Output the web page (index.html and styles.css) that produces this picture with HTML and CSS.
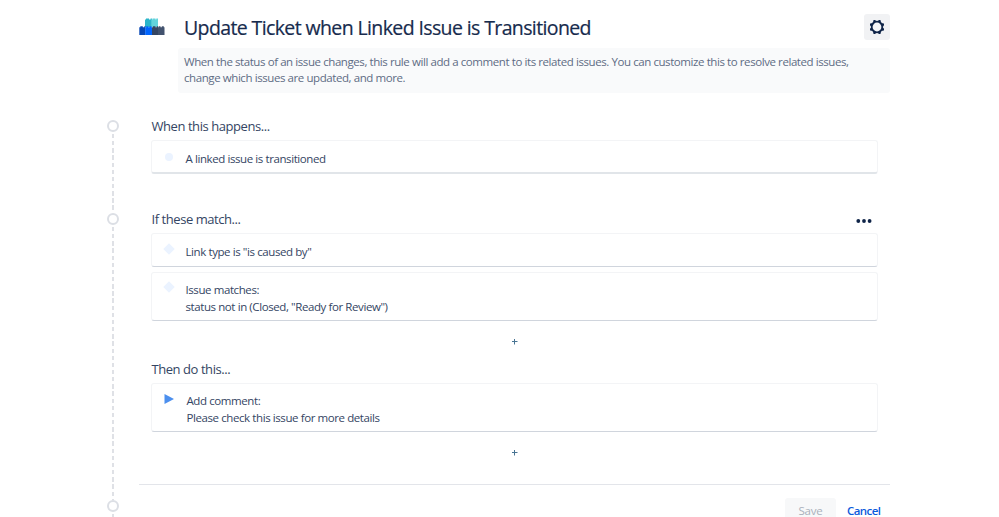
FILE: index.html
```html
<!DOCTYPE html>
<html lang="en">
<head>
<meta charset="utf-8">
<title>Automation rule</title>
<link rel="stylesheet" href="styles.css">
</head>
<body>
<div class="page">
  <div class="timeline">
    <span class="node"></span>
    <span class="dash dash-first"></span>
    <span class="node"></span>
    <span class="dash dash-second"></span>
    <span class="node"></span>
    <span class="dash dash-last"></span>
  </div>
  <main class="main">
    <header class="header">
      <svg class="logo" width="26" height="17" viewBox="0 0 26 17">
        <path fill="#2ab5ca" d="M6 9V1.6h1V.6h3v1h1.600V.6h1.300V9z"/>
        <path fill="#62d3dc" d="M12.500 9V1.600h1V.6h3v1h.800V.6h1.700v1V9z"/>
        <path fill="#0747b6" d="M.3 17V9.200h1v-1h2.500v1h1.500v-1h1.200V17z"/>
        <path fill="#0065ff" d="M6.300 17V9.200h1v-1h2v1h1.200v-1h2v1h.500V17z"/>
        <path fill="#344563" d="M13 17V9.200h1v-1h2.400v1h1.400v-1h1.400V17z"/>
        <path fill="#42526e" d="M19 17V9.200h.8v-1h1.700v1h1.300v-1h2v1h.700V17z"/>
      </svg>
      <h1 class="title">Update Ticket when Linked Issue is Transitioned</h1>
      <button class="settings" aria-label="Settings">
        <svg width="16" height="16" viewBox="0 0 16 16">
          <g fill="#0f2448">
            <rect x="4.200" y="1" width="2.700" height="14" rx="1"/>
            <rect x="9.100" y="1" width="2.700" height="14" rx="1"/>
            <rect x="1" y="4.200" width="14" height="2.700" rx="1"/>
            <rect x="1" y="9.100" width="14" height="2.700" rx="1"/>
            <circle cx="8" cy="8" r="6.200"/>
          </g>
          <circle cx="8" cy="8" r="4.400" fill="#f4f5f7"/>
        </svg>
      </button>
    </header>
    <p class="description">When the status of an issue changes, this rule will add a comment to its related issues. You can customize this to resolve related issues,<br>change which issues are updated, and more.</p>

    <section class="section">
      <h2 class="heading">When this happens...</h2>
      <div class="card card-single trigger">
        <svg class="mark" width="12" height="12" viewBox="0 0 12 12"><circle cx="6" cy="6" r="4" fill="#ebf3ff"/></svg>
        <div class="label">A linked issue is transitioned</div>
      </div>
    </section>

    <section class="section conditions">
      <h2 class="heading">If these match...
        <svg class="more" width="16" height="6" viewBox="0 0 16 6" fill="#0f2448"><circle cx="2.300" cy="3" r="1.900"/><circle cx="8" cy="3" r="1.900"/><circle cx="13.600" cy="3" r="1.900"/></svg>
      </h2>
      <div class="card card-single">
        <svg class="mark" width="12" height="12" viewBox="0 0 12 12"><path d="M6 .3 11.700 6 6 11.700.3 6z" fill="#ebf3ff"/></svg>
        <div class="label">Link type is "is caused by"</div>
      </div>
      <div class="card card-double second">
        <svg class="mark" width="12" height="12" viewBox="0 0 12 12"><path d="M6 .3 11.700 6 6 11.700.3 6z" fill="#ebf3ff"/></svg>
        <div class="label">Issue matches:<br>status not in (Closed, "Ready for Review")</div>
      </div>
      <div class="add"><svg width="6" height="6" viewBox="0 0 6 6"><path d="M0 2.500h5.500M2.500 0v5.500" stroke="#487493"/></svg></div>
    </section>

    <section class="section actions">
      <h2 class="heading">Then do this...</h2>
      <div class="card card-double action">
        <svg class="mark" width="12" height="12" viewBox="0 0 12 12"><path d="M1.500 1l9.500 5-9.500 5z" fill="#4c8fee"/></svg>
        <div class="label">Add comment:<br>Please check this issue for more details</div>
      </div>
      <div class="add"><svg width="6" height="6" viewBox="0 0 6 6"><path d="M0 2.500h5.500M2.500 0v5.500" stroke="#487493"/></svg></div>
    </section>

    <footer class="footer">
      <button class="save">Save</button>
      <button class="cancel">Cancel</button>
    </footer>
  </main>
</div>
</body>
</html>
```

FILE: styles.css
```css
* { box-sizing: border-box; }
body {
  margin: 0;
  background: #fff;
  color: #344563;
  font-family: "Open Sans", sans-serif;
  font-size: 11.5px;
  letter-spacing: -0.41px;
}
h1, h2, p { margin: 0; font-weight: 400; }
button { border: 0; padding: 0; font: inherit; letter-spacing: inherit; }
svg { display: block; flex: none; }

.page {
  display: flex;
  height: 517px;
  overflow: hidden;
  padding-left: 107px;
}
.timeline {
  display: flex;
  flex-direction: column;
  align-items: center;
  width: 12px;
  margin-right: 20px;
  padding-top: 120px;
}
.node {
  flex: none;
  width: 12px;
  height: 12px;
  border: 2px solid #dcdfe5;
  border-radius: 50%;
}
.dash {
  flex: none;
  width: 2px;
  background: repeating-linear-gradient(#dfe1e6 0 4.300px, transparent 4.300px 7.150px);
}
.dash-first { height: 79px; margin-top: 2px; }
.dash-second { height: 273px; margin-top: 2px; }
.dash-last { height: 8px; margin-top: 2px; }

.main { width: 751px; }
.header {
  display: flex;
  align-items: flex-start;
  height: 34px;
  margin-top: 14px;
}
.logo { margin: 4px 19px 0 0; }
.title {
  flex: 1;
  padding-top: 1px;
  color: #172b4d;
  font-size: 19.500px;
  line-height: 26px;
  letter-spacing: -0.615px;
  white-space: nowrap;
  -webkit-text-stroke: 0.200px #172b4d;
}
.settings {
  display: grid;
  place-items: center;
  width: 26px;
  height: 26px;
  border-radius: 3px;
  background: #f1f2f4;
}
.description {
  height: 45px;
  margin-left: 39px;
  padding: 6px 0 0 6px;
  border-radius: 3px;
  background: #f9fafb;
  color: #5e6c84;
  line-height: 16px;
  letter-spacing: -0.420px;
  white-space: nowrap;
}

.section { padding: 0 12px; }
.heading {
  display: flex;
  align-items: center;
  justify-content: space-between;
  height: 20px;
  padding: 0 6px 2px 0.500px;
  font-size: 13px;
  line-height: 18px;
  letter-spacing: -0.440px;
}
.more { margin-top: 3px; }
.section:first-of-type { padding-top: 24px; }
.conditions { padding-top: 36px; }
.actions { padding-top: 1px; }
.card {
  display: flex;
  gap: 10.500px;
  margin-top: 3px;
  padding: 0 11px;
  border: 1px solid #f3f4f6;
  border-bottom-color: #d0d5dd;
  border-radius: 3px;
  background: #fff;
}
.card-single { height: 34px; padding-top: 10px; }
.card-double { height: 49px; padding-top: 9px; }
.trigger { border-bottom: 2px solid #e1e5e9; }
.conditions .second { margin-top: 5px; }
.conditions .mark { margin-top: -1px; }
.label { line-height: 16.500px; white-space: nowrap; }
.action { gap: 11.500px; }
.add {
  display: flex;
  justify-content: center;
  align-items: center;
  height: 38px;
  padding-top: 4px;
}

.footer {
  display: flex;
  justify-content: flex-end;
  height: 60px;
  margin-top: 14px;
  padding: 13px 10px 0 0;
  border-top: 1px solid #e3e5ea;
}
.save {
  width: 51px;
  height: 26px;
  margin-right: 11px;
  border-radius: 3px 3px 0 0;
  background: #f7f8f9;
  color: #a9b0bb;
  line-height: 26px;
  letter-spacing: -0.200px;
}
.cancel {
  width: 33px;
  height: 26px;
  background: none;
  color: #0c5bdc;
  font-weight: 600;
  line-height: 26px;
  letter-spacing: -0.550px;
}
```
